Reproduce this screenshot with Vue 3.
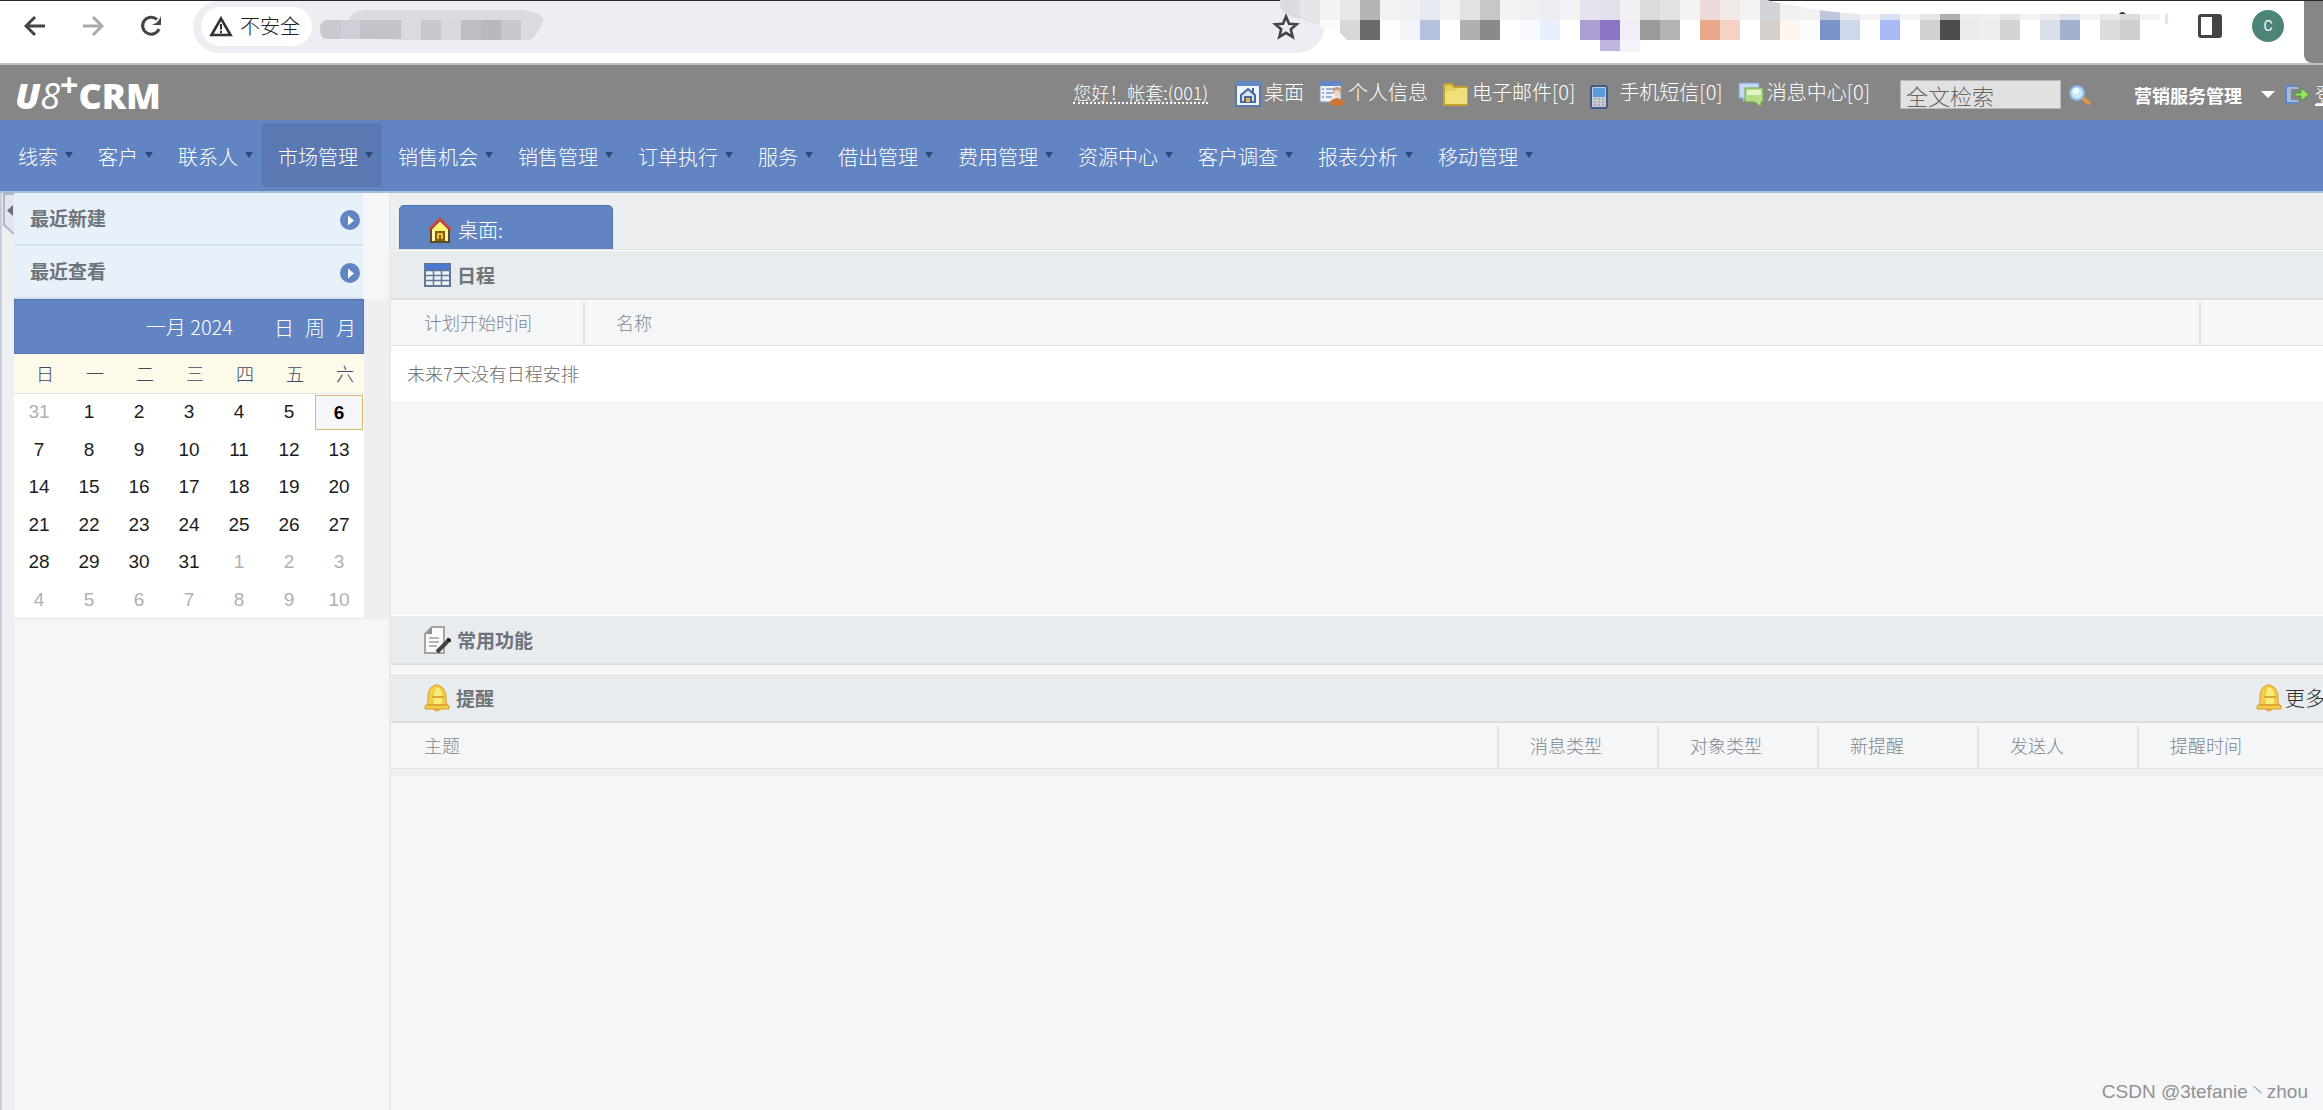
<script setup>
import { ref } from 'vue'

const keyword = ref('')
const menus = ['线索', '客户', '联系人', '市场管理', '销售机会', '销售管理', '订单执行', '服务', '借出管理', '费用管理', '资源中心', '客户调查', '报表分析', '移动管理']
const activeMenu = '市场管理'
const tools = [
  { icon: 'desk', label: '桌面' },
  { icon: 'user', label: '个人信息' },
  { icon: 'folder', label: '电子邮件[0]' },
  { icon: 'phone', label: '手机短信[0]' },
  { icon: 'chat', label: '消息中心[0]' }
]
const recents = ['最近新建', '最近查看']
const weekdays = ['日', '一', '二', '三', '四', '五', '六']
const weeks = Array.from({ length: 6 }, (_, w) =>
  Array.from({ length: 7 }, (_, d) => {
    const n = w * 7 + d
    if (n === 0) return { day: 31, out: true }
    if (n > 31) return { day: n - 31, out: true }
    return { day: n, out: false, today: n === 6 }
  })
)
const remindCols = ['主题', '消息类型', '对象类型', '新提醒', '发送人', '提醒时间']

const upper = ['#f3f3f3', '#e7e7e7', '#b4b4b4', '#f3f3f3', '#eff0f2', '#e7eaf0', '#f2f2f2', '#e2e2e2', '#c7c7c7', '#f3f3f3', '#eff0f2', '#eceef3', '#f2f2f2', '#e5e3ee', '#e3e0ec', '#f1f1f3', '#dcdcdc', '#e2e2e2', '#f2f2f2', '#ecd9d8', '#f2e8e6', '#f2f2f2', '#d3d4d7', '#f0f0f0', '#f2f2f2', '#bcc6dc', '#e6e9ee']
const lower = ['#d8d8d8', '#6a6a6a', '#fdfdfd', '#f2f5fa', '#b3c1dc', '#ffffff', '#b0b0b0', '#8a8a8a', '#ffffff', '#f8faff', '#e9f0fd', '#ffffff', '#ad9ed1', '#8b74c3', '#f1eef9', '#9a9a9a', '#b3b3b3', '#ffffff', '#e7a98a', '#f4d2c4', '#ffffff', '#d5d0cb', '#fff5ef', '#fcfcff', '#7b93c8', '#cfd7eb', '#ffffff', '#a9b9f6', '#ffffff', '#d1d1d1', '#4c4c4c', '#ebebeb', '#eeeeee', '#d4d4d4', '#ffffff', '#d9dfea', '#a2b1cd', '#ffffff', '#dcdcdc', '#cfcfcf', '#ffffff']
const band = ['#f3f3f3', '#dae0f4', '#f3f3f3', '#e6e6e6', '#b0b0b0', '#ececec', '#efefef', '#e6e6e6', '#f3f3f3', '#e9ebef', '#dde1e9', '#f3f3f3', '#e9e9e9', '#dcdcdc', '#f3f3f3']
</script>

<template>
  <div class="app">
    <div class="browser">
      <button class="tool" aria-label="后退">
        <svg width="22" height="22" viewBox="0 0 22 22" fill="none" stroke="#444" stroke-width="3"><path d="M21 11H3M11 2L2 11l9 9" /></svg>
      </button>
      <button class="tool" aria-label="前进">
        <svg width="22" height="22" viewBox="0 0 22 22" fill="none" stroke="#aaa" stroke-width="3"><path d="M1 11h18M11 2l9 9-9 9" /></svg>
      </button>
      <button class="tool" aria-label="刷新">
        <svg width="22" height="22" viewBox="0 0 22 22"><path d="M19 14a8.500 8.500 0 1 1-2-9.500" fill="none" stroke="#444" stroke-width="3" /><path d="M21 1v9h-9l4-2 3-3z" fill="#444" /></svg>
      </button>
      <div class="address">
        <button class="insecure">
          <svg width="24" height="21" viewBox="0 0 24 21"><path d="M12 2.500L2.500 19h19z" fill="none" stroke="#333" stroke-width="2.600" /><path d="M12 8v5.500M12 14.800v2.400" stroke="#333" stroke-width="2" /></svg>
          不安全
        </button>
        <svg class="masked" width="228" height="32" viewBox="0 0 228 32">
          <path d="M28 11q4-10 16-11h160q16 2 20 10l-4 9q-4 6-5 7-3 4-7 4H80L58 29H8q-8 0-8-10 0-9 8-9z" fill="#dadbe0" />
          <path d="M8 10h33v19H8q-8 0-8-10 0-9 8-9z" fill="#c9cacf" />
          <path d="M21 10h19v19H21z" fill="#ced0d9" /><path d="M40 10h41v19H40z" fill="#c3c3c9" />
          <path d="M101 10h20v20h-20z" fill="#c8c7cc" /><path d="M121 10h20v20h-20z" fill="#d8d8dd" />
          <path d="M141 10h20v20h-20z" fill="#bfbfc3" /><path d="M161 10h20v20h-20z" fill="#b9b9bd" /><path d="M181 10h20v20h-20z" fill="#c8c8cc" />
        </svg>
        <button class="star" aria-label="收藏">
          <svg width="28" height="27" viewBox="0 0 28 27"><path d="M14 3.500l3 7.200 7.700.6-5.900 5 1.900 7.600-6.700-4.100-6.700 4.100 1.900-7.600-5.900-5 7.700-.6z" fill="none" stroke="#444" stroke-width="2.600" /></svg>
        </button>
      </div>
      <svg class="extensions" width="890" height="54" viewBox="1280 0 890 54">
        <path d="M1280 0h40v24q-14-2-18-5-20-3-22-14z" fill="#dcdde2" />
        <path d="M1300 0h20v24q-12-2-20-6z" fill="#e5e6eb" />
        <path d="M1320 20h24v16q-10-8-24-9z" fill="#fbfbfb" />
        <clipPath id="smear"><path d="M1320 0h447q10 3 20 4 35 8 73 10v6h-540z" /></clipPath>
        <g clip-path="url(#smear)">
          <rect v-for="(c, i) in upper" :key="i" :x="1320 + i * 20" y="0" width="20" height="20" :fill="c" />
        </g>
        <rect v-for="(c, i) in band" :key="'b' + i" :x="1860 + i * 20" y="14" width="20" height="6" :fill="c" />
        <rect v-for="(c, i) in lower" :key="'l' + i" :x="1340 + i * 20" y="20" width="20" height="20" :fill="c" />
        <path d="M1339 32l8 8h-8z" fill="#fff" />
        <path d="M1600 40h20v11h-20z" fill="#c2b4e0" /><path d="M1620 40h20v12h-20z" fill="#f4f2fb" />
        <path d="M2119 14q3-4 7 0z" fill="#333" /><path d="M2165 14h3v10h-3z" fill="#dce7fb" />
      </svg>
      <div class="profile">
        <button class="tool" aria-label="侧边栏">
          <svg width="24" height="24" viewBox="0 0 24 24"><rect width="24" height="24" rx="3" fill="#444" /><path d="M3 3h11v18H3z" fill="#fff" /></svg>
        </button>
        <button class="avatar">C</button>
        <div class="corner"></div>
      </div>
    </div>

    <header class="header">
      <div class="logo"><span class="u">U</span><span class="eight">8</span><span class="plus">+</span><span>CRM</span></div>
      <div class="toolbar">
        <a href="#" class="greet">您好！帐套:(001)</a>
        <a v-for="t in tools" :key="t.icon" href="#" class="entry">
          <svg v-if="t.icon === 'desk'" width="26" height="26" viewBox="0 0 26 26">
            <rect x="1" y="1" width="24" height="24" fill="#f1f4f8" stroke="#5a78ab" stroke-width="2" /><path d="M0 0h26v5H0z" fill="#6388c4" />
            <path d="M6 14l7-6 7 6v7H6z" fill="#d7e2f2" stroke="#4668a6" stroke-width="2" /><path d="M9 15h8v6H9z" fill="#4668a6" /><path d="M11 17h4v4h-4z" fill="#f3b735" /><path d="M17 7h2v5h-2z" fill="#4668a6" />
          </svg>
          <svg v-else-if="t.icon === 'user'" width="26" height="26" viewBox="0 0 26 26">
            <rect x="1" y="1" width="21" height="20" fill="#edf2fb" stroke="#7d9bcb" /><path d="M0 0h23v5H0z" fill="#6388c4" />
            <path d="M3 8h2M3 12h2M3 16h2M7 8h8M7 12h7M7 16h6" stroke="#4f6fa8" stroke-width="1" />
            <path d="M16 12h5l-1 6h-4z" fill="#f2ddc8" /><circle cx="18" cy="10" r="4" fill="#c99a75" /><circle cx="18" cy="12" r="3" fill="#efd5bd" /><path d="M10 23q1-5 8-6 7 1 8 6-7 4-16 0z" fill="#cf7738" />
          </svg>
          <svg v-else-if="t.icon === 'folder'" width="26" height="26" viewBox="0 0 26 26">
            <path d="M1 4q0-1 1-1h7l2 3h13v18H1z" fill="#e5cd60" stroke="#c5a32a" stroke-width="2" /><path d="M2 10h11l2-3h9v16H2z" fill="#f0df7b" />
          </svg>
          <svg v-else-if="t.icon === 'phone'" class="low" width="26" height="26" viewBox="0 0 26 26">
            <rect x="1" y="3" width="16" height="22" rx="2" fill="#c6cad1" stroke="#405b91" stroke-width="2" /><path d="M3 5h12v9H3z" fill="#5f99de" /><path d="M4 16h10M4 19h10M4 22h10" stroke="#8a91a0" stroke-dasharray="2 2" />
          </svg>
          <svg v-else width="26" height="26" viewBox="0 0 26 26">
            <path d="M1 2h20v15H9l-4 4v-4H1z" fill="#c4d8f2" stroke="#7b9fd2" /><path d="M7 7h18v14h-2v5l-6-5H7z" fill="#b5dc86" stroke="#73a54d" /><path d="M9 9h14v5H9z" fill="#e2f3c8" />
          </svg>
          {{ t.label }}
        </a>
        <form class="search" @submit.prevent>
          <input v-model="keyword" type="text" placeholder="全文检索" aria-label="全文检索" />
          <button aria-label="搜索">
            <svg width="22" height="22" viewBox="0 0 22 22"><path d="M14 14l7 6" stroke="#dc9646" stroke-width="4" /><circle cx="8" cy="9" r="7" fill="#c6e7fb" stroke="#88b5e6" stroke-width="2" /><circle cx="7" cy="7" r="3" fill="#f2fbff" /></svg>
          </button>
        </form>
        <button class="module">营销服务管理 <i class="caret"></i></button>
        <a href="#" class="logout">
          <svg width="26" height="22" viewBox="0 0 26 22"><path d="M2 2h12v17H2z" fill="#a5b9d8" /><path d="M7 5h8v11H7z" fill="#868686" /><path d="M14 2H2v17h12" fill="none" stroke="#5f88c8" stroke-width="2" /><path d="M11 9h6V4l8 6.500-8 6.500v-5h-6z" fill="#97e55c" stroke="#4e9838" /></svg>
          <span>登录</span>
        </a>
      </div>
    </header>

    <nav class="nav">
      <a v-for="m in menus" :key="m" href="#" :class="{ active: m === activeMenu }">{{ m }}<i></i></a>
    </nav>

    <div class="body">
      <div class="rail">
        <button aria-label="收起侧栏">
          <svg width="11" height="42" viewBox="0 0 11 42"><path d="M11 1H1v31l10 9" fill="#e4e6ef" stroke="#b1b4c6" stroke-width="2" /><path d="M10 12v11l-6-5.500z" fill="#6a7188" /></svg>
        </button>
      </div>
      <aside class="side">
        <div class="recent">
          <button v-for="r in recents" :key="r">
            {{ r }}
            <svg width="20" height="20" viewBox="0 0 20 20"><circle cx="10" cy="10" r="10" fill="#6184c2" /><path d="M8 5.500l6 5-6 5z" fill="#fff" /></svg>
          </button>
        </div>
        <div class="calendar-wrap">
          <div class="calendar">
            <div class="cal-head">
              <h2>一月 2024</h2>
              <div class="views"><a href="#">日</a><a href="#">周</a><a href="#">月</a></div>
            </div>
            <table>
              <thead>
                <tr><th v-for="d in weekdays" :key="d">{{ d }}</th></tr>
              </thead>
              <tbody>
                <tr v-for="(w, i) in weeks" :key="i">
                  <td v-for="(d, j) in w" :key="j" :class="{ out: d.out, today: d.today }"><span>{{ d.day }}</span></td>
                </tr>
              </tbody>
            </table>
          </div>
        </div>
      </aside>

      <main class="main">
        <div class="tabs">
          <a href="#" class="tab">
            <svg width="24" height="26" viewBox="0 0 24 26">
              <path d="M3 12l9-9 9 9v13H3z" fill="#fff3b0" stroke="#5d4a1e" stroke-width="2" /><path d="M5 13l7-7 7 7v2H5z" fill="#fdf36d" />
              <path d="M8 15h8v8H8z" fill="#f0c23b" stroke="#80600f" stroke-width="2" /><path d="M11 18h2v6h-2z" fill="#80600f" />
              <path d="M1 13L12 2l11 11" fill="none" stroke="#c14a42" stroke-width="3" />
            </svg>
            桌面:
          </a>
        </div>

        <section class="schedule">
          <h3>
            <svg width="27" height="24" viewBox="0 0 27 24"><path d="M1 1h25v22H1z" fill="#edf3fb" stroke="#637794" stroke-width="2" /><path d="M1 1h25v6H1z" fill="#4c78cf" /><path d="M1 7.500h25M1 12.500h25M1 17.500h25M9.500 7v16M17.500 7v16" stroke="#637794" stroke-width="1.500" /></svg>
            日程
          </h3>
          <table>
            <thead>
              <tr><th class="plan">计划开始时间</th><th>名称</th><th class="tail"></th></tr>
            </thead>
            <tbody>
              <tr><td colspan="3">未来7天没有日程安排</td></tr>
            </tbody>
          </table>
        </section>

        <section class="common">
          <h3>
            <svg width="27" height="28" viewBox="0 0 27 28"><path d="M8 1h12v26H1V8z" fill="#fafafa" stroke="#a5a5a5" stroke-width="2" /><path d="M8 1v7H1z" fill="#8f8f8f" /><path d="M5 12h10M5 16h10M5 20h8" stroke="#b5b5b5" stroke-width="2" /><path d="M13 26L26 13" stroke="#444" stroke-width="4" /><path d="M23 13l4 2" stroke="#222" stroke-width="3" /></svg>
            常用功能
          </h3>
        </section>

        <section class="remind">
          <h3>
            <svg width="26" height="28" viewBox="0 0 26 28"><path d="M9 2q4-3 7 0 6 3 6 11v6l3 3v3H1v-3l3-3v-6q0-8 5-11z" fill="#f2cd48" stroke="#d99a36" /><path d="M12 4q-3 4-2 17h8q1-13-3-17z" fill="#fbec7c" /><path d="M3 21h20M8 13h12" stroke="#dca634" stroke-width="2" /><path d="M9 25h8q-4 5-8 0z" fill="#e5a73c" /></svg>
            提醒
            <a href="#" class="more">
              <svg width="26" height="28" viewBox="0 0 26 28"><path d="M9 2q4-3 7 0 6 3 6 11v6l3 3v3H1v-3l3-3v-6q0-8 5-11z" fill="#f2cd48" stroke="#d99a36" /><path d="M12 4q-3 4-2 17h8q1-13-3-17z" fill="#fbec7c" /><path d="M3 21h20M8 13h12" stroke="#dca634" stroke-width="2" /><path d="M9 25h8q-4 5-8 0z" fill="#e5a73c" /></svg>
              更多
            </a>
          </h3>
          <table>
            <thead>
              <tr><th v-for="(c, i) in remindCols" :key="c" :class="{ fixed: i > 0, last: i === 5 }">{{ c }}</th></tr>
            </thead>
          </table>
          <div class="strip"></div>
        </section>
      </main>
    </div>
    <div class="watermark">CSDN @3tefanie丶zhou</div>
  </div>
</template>

<style>
body {
  margin: 0;
  overflow: hidden;
}
</style>

<style scoped>
.app {
  position: relative;
  display: flex;
  flex-direction: column;
  min-height: 100vh;
  overflow: hidden;
  background: #f5f6f8;
  color: #6d747b;
  font-family: "Noto Sans CJK SC", sans-serif;
  font-size: 20px;
  font-weight: 300;
  line-height: 24px;
  white-space: nowrap;
}
.app * { box-sizing: border-box; }
a { color: inherit; text-decoration: none; }
button { display: flex; align-items: center; margin: 0; padding: 0; border: 0; background: none; color: inherit; font: inherit; }
svg { display: block; flex: none; }
h2, h3 { margin: 0; font-size: 20px; }
table { width: 100%; border-collapse: collapse; table-layout: fixed; }
th { font-weight: 300; text-align: left; }

.browser {
  position: relative;
  display: flex;
  align-items: flex-start;
  height: 65px;
  padding-left: 24px;
  border-top: 1px solid #2a262b;
  border-bottom: 2px solid #c4c4c4;
  background: #fff;
}
.browser > .tool { width: 58px; height: 50px; }
.address {
  display: flex;
  flex: 1;
  align-items: center;
  height: 52px;
  margin-left: -5px;
  padding: 0 24px 2px 8px;
  border-radius: 26px;
  background: #edeef4;
}
.insecure { gap: 7px; height: 39px; padding: 0 12px 0 8px; border-radius: 20px; background: #fff; color: #222; }
.masked { margin-left: 8px; }
.star { margin-left: auto; }
.extensions { position: absolute; top: -1px; right: 153px; }
.profile { display: flex; align-items: center; width: 999px; height: 62px; padding-left: 874px; }
.profile .tool, .avatar { margin-bottom: 12px; }
.avatar {
  justify-content: center;
  width: 32px;
  height: 32px;
  margin-left: 30px;
  border-radius: 50%;
  background: #4c8577;
  color: #fff;
  font-family: Roboto, sans-serif;
  font-size: 14px;
  font-weight: 400;
}
.corner { flex: 1; align-self: stretch; margin-left: 20px; border-radius: 0 0 0 8px; background: #868686; }

.header {
  display: flex;
  align-items: center;
  justify-content: space-between;
  height: 55px;
  padding-left: 15px;
  background: #868686;
  color: #fff;
}
.logo { display: flex; align-items: center; padding-top: 6px; font-family: "Open Sans", sans-serif; font-size: 36px; font-weight: 800; line-height: 50px; }
.logo .u { font-style: italic; }
.logo .eight { font-style: italic; font-weight: 400; }
.logo .plus { align-self: flex-start; font-size: 32px; font-weight: 700; line-height: 28px; }
.toolbar { display: flex; align-items: center; margin-right: -32px; }
.greet { margin-right: 27px; font-size: 18px; line-height: 20px; border-bottom: 2px dotted #fff; }
.entry { display: flex; align-items: center; gap: 3px; margin-right: 15px; padding-bottom: 2px; }
.entry svg { margin-top: 4px; }
.entry svg.low { margin-top: 8px; }
.search { display: flex; align-items: center; gap: 8px; margin: 4px 43px 0 15px; }
.search input { width: 161px; height: 29px; padding: 0 5px; border: 1px solid #b5b5bd; border-radius: 0; background: #e1e1e1; font: 300 22px "Noto Sans CJK SC", sans-serif; color: #555; }
.search input::placeholder { color: #666; }
.module { gap: 19px; padding-top: 4px; font-size: 18px; font-weight: 700; }
.caret { border: 7px solid transparent; border-top-color: #fff; border-bottom: 0; }
.logout { display: flex; align-items: center; gap: 5px; margin-left: 9px; padding-top: 4px; }
.logout span { text-decoration: underline; }

.nav { display: flex; height: 73px; padding: 3px 2px 4px; border-bottom: 2px solid #a3bfdb; background: #6184c2; color: #fff; }
.nav a { display: flex; align-items: center; padding: 3px 9px 0 16px; border-radius: 4px; }
.nav a i { margin: 0 0 4px 7px; border: 4px solid transparent; border-top: 6px solid #2c477e; border-bottom: 0; }
.nav a.active { background: #5a79b3; }

.body { display: flex; flex: 1; }
.rail { width: 14px; padding-left: 1px; border-left: 2px solid #c6cede; background: #edeff1; }
.side { width: 377px; border-right: 2px solid #e6eaec; background: #f5f6f8; }
.recent { width: 349px; }
.recent button {
  justify-content: space-between;
  width: 100%;
  height: 53px;
  padding: 0 3px 2px 16px;
  border-bottom: 2px solid #d5e1ea;
  background: #e8f1f9;
  font-size: 19px;
  font-weight: 700;
}
.recent svg { margin-top: 4px; }
.calendar-wrap { background: #edeff1; }
.calendar { width: 350px; background: #fff; border-bottom: 1px solid #e3e5e8; }
.cal-head { display: flex; align-items: center; justify-content: flex-end; height: 55px; border: 1px solid #5374b0; background: #6184c2; color: #fff; }
.cal-head h2 { font-weight: 300; }
.views { display: flex; gap: 11px; margin: 3px 7px 0 41px; }
.calendar th { height: 39px; padding: 0 0 0 12px; border-bottom: 1px solid #e3e5e8; background: #fdfaea; color: #3f4866; font-size: 18px; text-align: center; }
.calendar tbody { font-family: "Liberation Sans", sans-serif; font-size: 19px; color: #1c1c1c; }
.calendar tbody tr:nth-child(even) { height: 37px; }
.calendar tbody tr:nth-child(odd) { height: 38px; }
.calendar td { padding: 0; text-align: center; }
.calendar td.out { color: #b0b0b0; }
.today span { display: block; height: 35px; margin: 0 1px; border: 1px solid #dcb76b; background: #f4f6f9; color: #000; font-weight: 700; line-height: 33px; }

.main { flex: 1; min-width: 0; }
.tabs { display: flex; align-items: flex-end; height: 57px; padding-left: 8px; border-bottom: 1px solid #dde2e4; background: #edeff1; }
.tab { display: flex; align-items: center; gap: 6px; width: 214px; height: 44px; padding: 4px 0 0 28px; border: 1px solid #5374b0; border-bottom: 0; border-radius: 5px 5px 0 0; background: #6184c2; color: #fff; }
h3 { display: flex; align-items: center; gap: 6px; height: 50px; padding-left: 33px; border-top: 1px solid #fff; border-bottom: 2px solid #dcdfe1; background: #e8ecef; font-size: 19px; }
.schedule { height: 365px; }
section th { height: 45px; padding: 0 0 0 33px; border-bottom: 1px solid #dde2e4; background: linear-gradient(#e0e2e4, #e0e2e4) left bottom / 2px 42px no-repeat; color: #7f888f; font-size: 18px; }
section th:first-child { background: none; }
.plan { width: 192px; }
.tail { width: 124px; }
.schedule td { height: 56px; padding: 0 0 0 16px; background: #fff; color: #6c6c6c; font-size: 18px; }
.common { padding-bottom: 8px; }
.more { display: flex; align-items: center; gap: 3px; margin: 0 -2px 0 auto; color: #2c2c2c; font-size: 20px; font-weight: 300; }
.fixed { width: 160px; }
.last { width: 186px; }
.strip { height: 7px; background: #edeff1; }
.watermark { position: absolute; right: 15px; bottom: 6px; color: #909294; font-family: "Liberation Sans", "Noto Sans CJK SC", sans-serif; font-size: 19px; }
</style>
